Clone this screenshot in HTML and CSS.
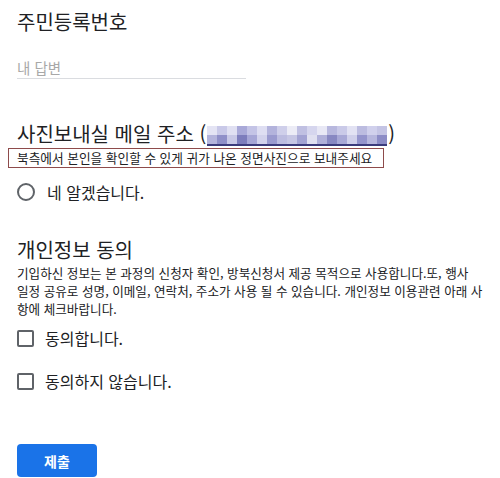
FILE: index.html
```html
<!DOCTYPE html>
<html lang="ko">
<head>
    <meta charset="UTF-8">
    <meta name="viewport" content="width=device-width, initial-scale=1.0">
    <title>신청서</title>
    <link rel="stylesheet" href="styles.css">
</head>
<body>
    <div class="form">
        <!-- 주민등록번호 -->
        <section class="question q-id">
            <div class="q-title">주민등록번호</div>
            <div class="answer">내 답변</div>
        </section>

        <!-- 사진 메일 -->
        <section class="question q-photo">
            <div class="q-title">사진보내실 메일 주소 (<span class="email-blur" aria-hidden="true"></span>)</div>
            <div class="q-note">북측에서 본인을 확인할 수 있게 귀가 나온 정면사진으로 보내주세요</div>
            <label class="option radio-option">
                <span class="radio"></span>
                <span>네 알겠습니다.</span>
            </label>
        </section>

        <!-- 개인정보 동의 -->
        <section class="question q-agree">
            <div class="q-title">개인정보 동의</div>
            <p class="q-desc">기입하신 정보는 본 과정의 신청자 확인, 방북신청서 제공 목적으로 사용합니다.또, 행사<br>일정 공유로 성명, 이메일, 연락처, 주소가 사용 될 수 있습니다. 개인정보 이용관련 아래 사항에 체크바랍니다.</p>
            <label class="option check-option first">
                <span class="checkbox"></span>
                <span>동의합니다.</span>
            </label>
            <label class="option check-option">
                <span class="checkbox"></span>
                <span>동의하지 않습니다.</span>
            </label>
        </section>

        <button class="submit">제출</button>
    </div>
</body>
</html>
```

FILE: styles.css
```css
body {
    margin: 0;
    padding: 0 14px 0 17px;
    background: #ffffff;
    color: #202124;
    font-family: "Noto Sans CJK KR", "Noto Sans", sans-serif;
}
.form {
    padding-top: 10px;
}
.q-title {
    height: 24px;
    font-size: 20px;
    line-height: 24px;
    white-space: nowrap;
}
.answer {
    width: 229px;
    margin-top: 24px;
    font-size: 14.5px;
    line-height: 20px;
    color: #a8a8a8;
    border-bottom: 1px solid #dadce0;
}
.q-photo {
    margin-top: 43px;
}
.email-blur {
    display: inline-block;
    width: 180px;
    height: 18px;
    margin: 0 1px 0 1px;
    vertical-align: -4px;
    border-bottom: 2px solid #3b3b7c;
    background:
        linear-gradient(90deg,
            #e4e4f4 0 10px, #c9c9e8 10px 20px, #e0e0f2 20px 30px, #a9a9d8 30px 40px,
            #c4c4e6 40px 50px, #dedef2 50px 60px, #b3b3dc 60px 70px, #cfcfea 70px 80px,
            #ececf6 80px 90px, #c0c0e2 90px 100px, #d6d6ee 100px 110px, #e8e8f5 110px 120px,
            #b8b8de 120px 130px, #cacae8 130px 140px, #e2e2f3 140px 150px, #bcbce0 150px 160px,
            #d0d0ec 160px 170px, #c4c4e4 170px 180px) top / 100% 50% no-repeat,
        linear-gradient(90deg,
            #b4b4dc 0 10px, #8f8fc8 10px 20px, #c8c8e6 20px 30px, #7d7dbc 30px 40px,
            #a6a6d6 40px 50px, #d2d2ec 50px 60px, #9a9acf 60px 70px, #bcbce0 70px 80px,
            #c6c6e4 80px 90px, #a3a3d3 90px 100px, #e0e0f0 100px 110px, #b0b0d9 110px 120px,
            #8888c2 120px 130px, #a8a8d6 130px 140px, #cfcfea 140px 150px, #9494cc 150px 160px,
            #b6b6dd 160px 170px, #8c8cc6 170px 180px) bottom / 100% 50% no-repeat;
}
.q-note {
    width: fit-content;
    margin: 2px 0 0 -9px;
    padding: 0 11px 0 8px;
    border: 1px solid #8e4b4b;
    font-size: 12.7px;
    line-height: 18px;
    white-space: nowrap;
}
.option {
    display: flex;
    align-items: center;
    font-size: 16px;
    line-height: 18px;
}
.radio-option {
    margin-top: 15px;
    gap: 12px;
}
.radio {
    box-sizing: border-box;
    width: 18px;
    height: 18px;
    border: 2px solid #5f6368;
    border-radius: 50%;
}
.q-agree {
    margin-top: 37px;
}
.q-desc {
    margin: 2px 0 0;
    font-size: 12.6px;
    line-height: 18px;
    word-break: break-all;
}
.check-option {
    gap: 11px;
    margin-top: 25px;
}
.check-option.first {
    margin-top: 11px;
}
.checkbox {
    box-sizing: border-box;
    width: 17px;
    height: 17px;
    border: 2px solid #5f6368;
    border-radius: 2px;
}
.submit {
    display: block;
    width: 80px;
    height: 33px;
    margin-top: 54px;
    border: none;
    border-radius: 4px;
    background: #1a73e8;
    color: #ffffff;
    font-family: "Noto Sans CJK KR", sans-serif;
    font-size: 14px;
    font-weight: 700;
}
```
